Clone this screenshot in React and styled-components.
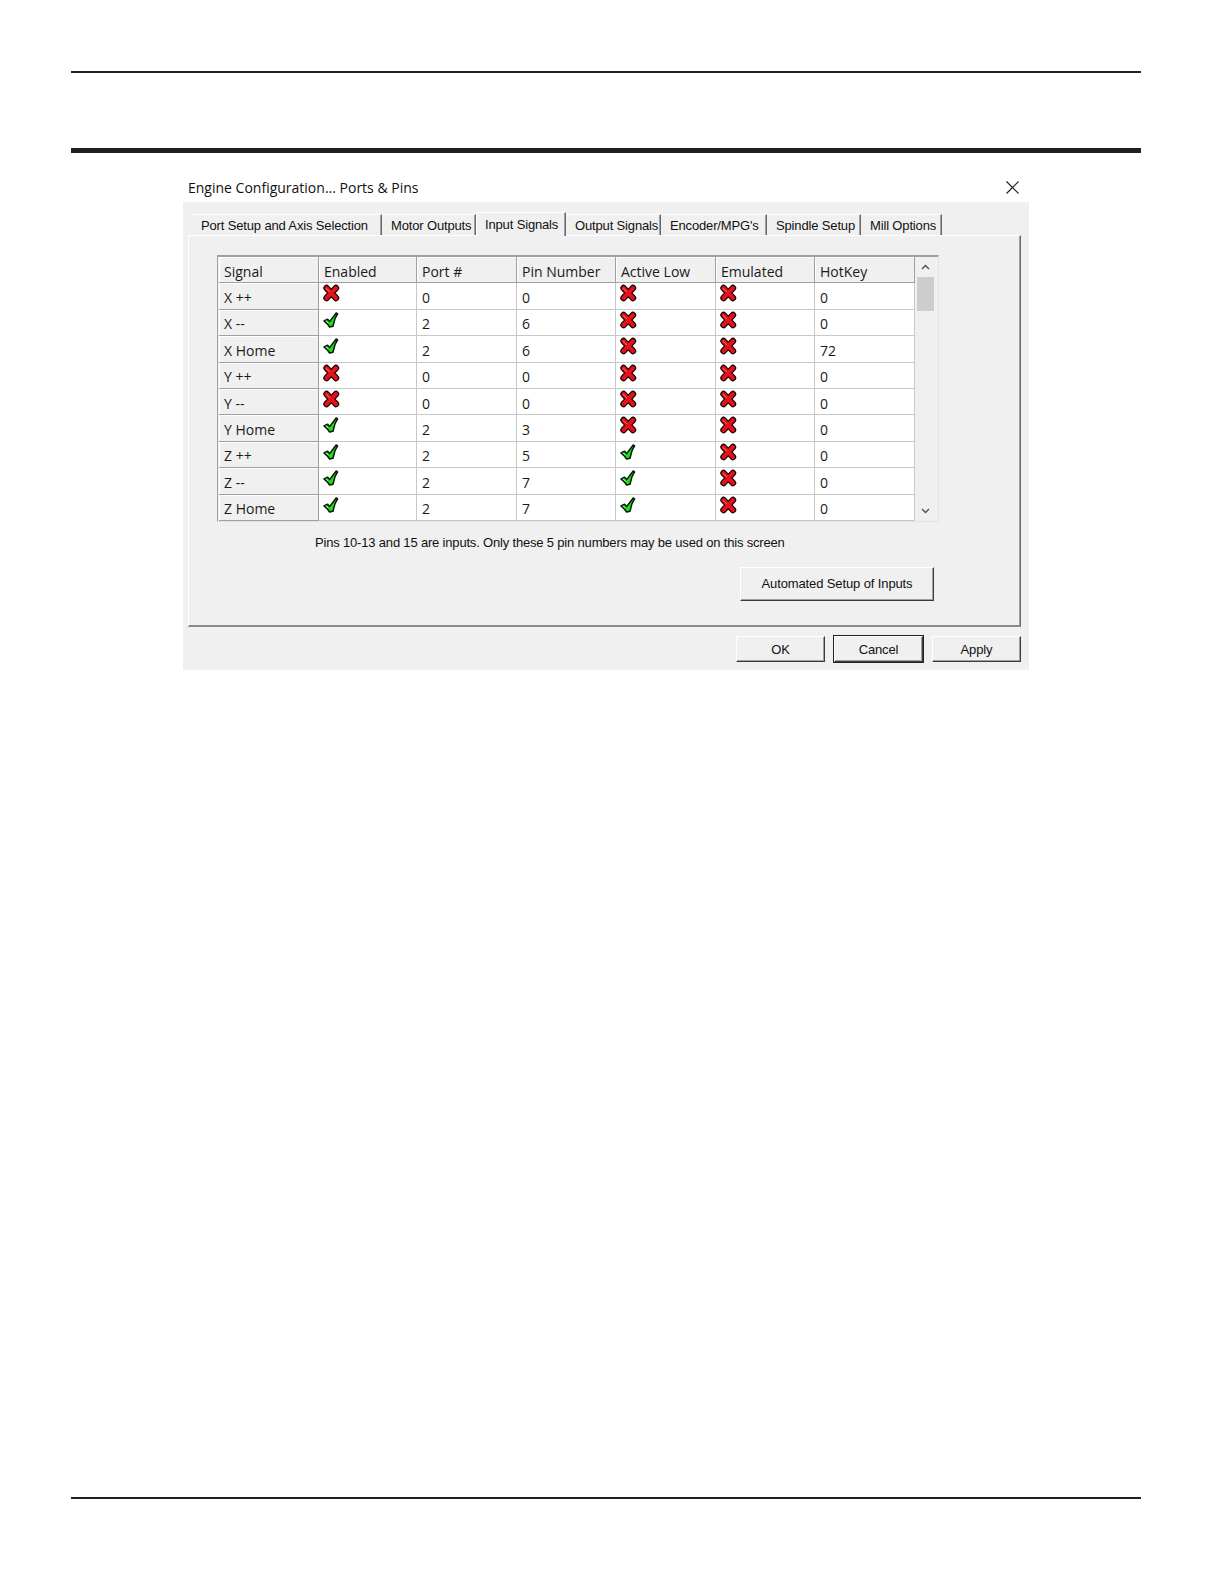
import React from 'react'
import styled, { createGlobalStyle } from 'styled-components'

const Global = createGlobalStyle`
  html, body { margin: 0; padding: 0; background: #fff; overflow: hidden; }
`

const Page = styled.div`
  width: 1070px;
  height: 1584px;
  margin-left: 71px;
  padding-top: 71px;
  box-sizing: border-box;
  display: flex;
  flex-direction: column;
  overflow: hidden;
`

const Rule = styled.div`
  flex: none;
  height: ${p => p.$thick ? 5 : 2}px;
  background: #231f20;
  margin-top: ${p => p.$top || 0}px;
`

const BottomRule = styled(Rule)`
  margin-top: auto;
  margin-bottom: 85px;
`

const Shot = styled.div`
  width: 846px;
  margin: 19px 0 0 112px;
  font-family: "Liberation Sans", Arial, sans-serif;
`

const TitleBar = styled.div`
  height: 30px;
  background: #fff;
  display: flex;
  align-items: center;
  justify-content: space-between;
  padding: 0 10px 0 5px;
  font-family: "Open Sans", "Noto Sans", sans-serif;
  font-size: 14px;
  color: #111;
`

const Body = styled.div`
  background: #f0f0f0;
  padding: 9px 8px 8px 5px;
  display: flex;
  flex-direction: column;
`

const TabRow = styled.div`
  display: flex;
  align-items: flex-end;
  height: 24px;
  padding-left: 4px;
`

const Tab = styled.div`
  width: ${p => p.$w}px;
  height: ${p => p.$active ? 24 : 21}px;
  box-sizing: border-box;
  padding-left: 8px;
  display: flex;
  align-items: center;
  font-size: 13px;
  letter-spacing: -0.15px;
  color: #111;
  border-top: 1px solid #fff;
  border-left: 1px solid ${p => p.$active ? '#fff' : 'transparent'};
  border-right: 1px solid #696969;
  box-shadow: inset -1px 0 #a0a0a0;
  background: #f0f0f0;
  position: relative;
  z-index: ${p => p.$active ? 2 : 1};
  margin-bottom: ${p => p.$active ? -1 : 0}px;
`

const Panel = styled.div`
  height: 392px;
  box-sizing: border-box;
  border-top: 1px solid #fff;
  border-left: 1px solid #fff;
  border-right: 1px solid #696969;
  border-bottom: 2px solid #8a8a8a;
  box-shadow: inset -1px 0 #a0a0a0;
  padding: 19px 0 0 28px;
  display: flex;
  flex-direction: column;
`

const GridFrame = styled.div`
  width: 719px;
  display: flex;
  border-top: 2px solid #a0a0a0;
  border-left: 1px solid #a0a0a0;
  border-right: 1px solid #e3e3e3;
  border-bottom: 1px solid #e3e3e3;
  box-shadow: inset 1px 0 #f0f0f0;
  padding-left: 1px;
`

const Table = styled.div`
  display: grid;
  grid-template-columns: 100px 98px 100px 99px 100px 99px 100px;
  grid-auto-rows: 26.4px;
  font-family: "Open Sans", "Noto Sans", sans-serif;
  font-size: 14px;
  color: #1a1a1a;
`

const Cell = styled.div`
  box-sizing: border-box;
  background: ${p => p.$head ? '#f0f0f0' : '#fff'};
  border-right: 1px solid ${p => p.$head ? '#a0a0a0' : '#c8c8c8'};
  border-bottom: 1px solid ${p => p.$head ? '#a0a0a0' : '#c8c8c8'};
  box-shadow: ${p => p.$head ? 'inset 1px 1px #fff' : 'none'};
  padding-left: ${p => p.$icon ? 3 : 5}px;
  padding-top: ${p => p.$icon ? 1 : 3}px;
  display: flex;
  align-items: ${p => p.$icon ? 'flex-start' : 'center'};
  white-space: nowrap;
`

const ScrollBar = styled.div`
  width: 21px;
  background: #f0f0f0;
  display: flex;
  flex-direction: column;
  align-items: center;
`

const Arrow = styled.div`
  height: 20px;
  display: flex;
  align-items: center;
  justify-content: center;
`

const Thumb = styled.div`
  width: 17px;
  height: 34px;
  background: #cdcdcd;
`

const Spacer = styled.div`
  flex: 1;
`

const Note = styled.div`
  margin: 13px 0 0 98px;
  height: 16px;
  line-height: 16px;
  font-size: 13px;
  letter-spacing: -0.18px;
  color: #111;
`

const Button = styled.button`
  width: ${p => p.$w}px;
  height: ${p => p.$h}px;
  box-sizing: border-box;
  background: #f0f0f0;
  border: none;
  border-top: 1px solid #fff;
  border-left: 1px solid #fff;
  border-right: 1px solid #3c3c3c;
  border-bottom: 1px solid #3c3c3c;
  box-shadow: ${p => p.$def
    ? '0 0 0 1px #222, inset -1px -1px #a0a0a0'
    : 'inset -1px -1px #a0a0a0'};
  font-family: "Liberation Sans", Arial, sans-serif;
  font-size: 13px;
  letter-spacing: -0.12px;
  color: #111;
  padding: 0;
`

const AutoRow = styled.div`
  display: flex;
  margin-top: 16px;
  padding-left: 523px;
`

const Footer = styled.div`
  display: flex;
  justify-content: flex-end;
  gap: 9px;
  margin-top: 9px;
`

// chunky red cross: black outline stroke under a red stroke
const RedX = () => (
  <svg width="19" height="18" viewBox="0 0 19 18">
    <path d="M4.5 4 L14 14 M14 4 L4.5 14" stroke="#140000" strokeWidth="6.4" strokeLinecap="round" />
    <path d="M4.5 4 L14 14 M14 4 L4.5 14" stroke="#e3121a" strokeWidth="4" strokeLinecap="round" />
    <path d="M4.2 4.4 L7.6 7.8" stroke="#ff6b6b" strokeWidth="1" strokeLinecap="round" />
  </svg>
)

// wedge-shaped green tick
const Check = () => (
  <svg width="19" height="18" viewBox="0 0 19 18">
    <path d="M2 10 L5.6 8.2 L7.6 10.6 L14.2 2 L15.6 2.8 L13 7.6 L11 15.2 L7.6 16 L5.6 13.2 Z"
      fill="#22dc22" stroke="#001a00" strokeWidth="1.5" strokeLinejoin="round" />
    <path d="M4 10 L6 11.8" stroke="#9cff9c" strokeWidth="1" strokeLinecap="round" />
  </svg>
)

const Mark = ({ on }) => (on ? <Check /> : <RedX />)

const Chevron = ({ down }) => (
  <svg width="9" height="6" viewBox="0 0 9 6">
    <path d={down ? 'M1 1 L4.5 4.5 L8 1' : 'M1 5 L4.5 1.5 L8 5'} fill="none" stroke="#555" strokeWidth="1.5" />
  </svg>
)

const CloseIcon = () => (
  <svg width="13" height="13" viewBox="0 0 13 13">
    <path d="M0.5 0.5 L12.5 12.5 M12.5 0.5 L0.5 12.5" stroke="#222" strokeWidth="1.2" />
  </svg>
)

const tabs = [
  ['Port Setup and Axis Selection', 190],
  ['Motor Outputs', 94],
  ['Input Signals', 90, true],
  ['Output Signals', 95],
  ["Encoder/MPG's", 106],
  ['Spindle Setup', 94],
  ['Mill Options', 81],
]

const heads = ['Signal', 'Enabled', 'Port #', 'Pin Number', 'Active Low', 'Emulated', 'HotKey']

const rows = [
  ['X ++', false, 0, 0, false, false, 0],
  ['X --', true, 2, 6, false, false, 0],
  ['X Home', true, 2, 6, false, false, 72],
  ['Y ++', false, 0, 0, false, false, 0],
  ['Y --', false, 0, 0, false, false, 0],
  ['Y Home', true, 2, 3, false, false, 0],
  ['Z ++', true, 2, 5, true, false, 0],
  ['Z --', true, 2, 7, true, false, 0],
  ['Z Home', true, 2, 7, true, false, 0],
]

export default function App() {
  return (
    <>
      <Global />
      <Page>
        <Rule />
        <Rule $thick $top={75} />
        <Shot>
          <TitleBar>
            <span>Engine Configuration... Ports &amp; Pins</span>
            <CloseIcon />
          </TitleBar>
          <Body>
            <TabRow>
              {tabs.map(([label, w, active]) => (
                <Tab key={label} $w={w} $active={active}>{label}</Tab>
              ))}
            </TabRow>
            <Panel>
              <GridFrame>
                <Table>
                  {heads.map(h => <Cell key={h} $head>{h}</Cell>)}
                  {rows.map(r => (
                    <React.Fragment key={r[0]}>
                      <Cell $head>{r[0]}</Cell>
                      <Cell $icon><Mark on={r[1]} /></Cell>
                      <Cell>{r[2]}</Cell>
                      <Cell>{r[3]}</Cell>
                      <Cell $icon><Mark on={r[4]} /></Cell>
                      <Cell $icon><Mark on={r[5]} /></Cell>
                      <Cell>{r[6]}</Cell>
                    </React.Fragment>
                  ))}
                </Table>
                <ScrollBar>
                  <Arrow><Chevron /></Arrow>
                  <Thumb />
                  <Spacer />
                  <Arrow><Chevron down /></Arrow>
                </ScrollBar>
              </GridFrame>
              <Note>Pins 10-13 and 15 are inputs. Only these 5 pin numbers may be used on this screen</Note>
              <AutoRow>
                <Button $w={194} $h={34}>Automated Setup of Inputs</Button>
              </AutoRow>
            </Panel>
            <Footer>
              <Button $w={89} $h={26}>OK</Button>
              <Button $w={89} $h={26} $def>Cancel</Button>
              <Button $w={89} $h={26}>Apply</Button>
            </Footer>
          </Body>
        </Shot>
        <BottomRule />
      </Page>
    </>
  )
}
